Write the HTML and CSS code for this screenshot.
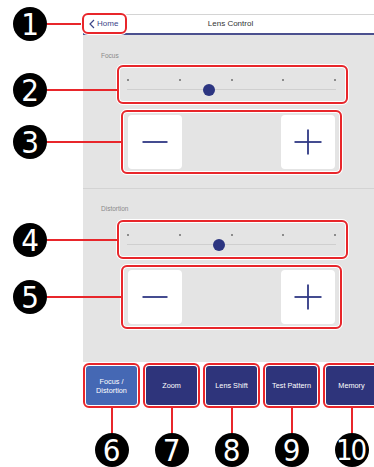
FILE: index.html
```html
<!DOCTYPE html>
<html lang="en">
<head>
<meta charset="utf-8">
<title>Lens Control</title>
<link rel="stylesheet" href="styles.css">
</head>
<body>
<div class="figure">
  <div class="panel">
    <header class="bar">
      <a class="home frame" href="#">
        <svg class="chev" width="6" height="10" viewBox="0 0 6 10"><path d="M5 1 L1 5 L5 9" fill="none" stroke="#3b4488" stroke-width="1.2"/></svg>
        <span>Home</span>
      </a>
      <h1 class="title">Lens Control</h1>
      <span></span>
    </header>

    <section class="group">
      <div class="label">Focus</div>
      <div class="frame slider-frame">
        <div class="slider">
          <div class="ticks"><i></i><i></i><i></i><i></i><i></i></div>
          <div class="track"></div>
          <div class="thumb" style="left:39%"></div>
        </div>
      </div>
      <div class="frame steps">
        <button class="step"><svg width="28" height="28" viewBox="0 0 28 28"><line x1="1.5" y1="14" x2="26.5" y2="14" stroke="#2f3884" stroke-width="1.8"/></svg></button>
        <button class="step"><svg width="28" height="28" viewBox="0 0 28 28"><line x1="0.5" y1="14" x2="27.5" y2="14" stroke="#2f3884" stroke-width="1.8"/><line x1="14" y1="1.5" x2="14" y2="26.5" stroke="#2f3884" stroke-width="1.8"/></svg></button>
      </div>
    </section>

    <hr class="sep">

    <section class="group g2">
      <div class="label">Distortion</div>
      <div class="frame slider-frame">
        <div class="slider">
          <div class="ticks"><i></i><i></i><i></i><i></i><i></i></div>
          <div class="track"></div>
          <div class="thumb" style="left:44%"></div>
        </div>
      </div>
      <div class="frame steps">
        <button class="step"><svg width="28" height="28" viewBox="0 0 28 28"><line x1="1.5" y1="14" x2="26.5" y2="14" stroke="#2f3884" stroke-width="1.8"/></svg></button>
        <button class="step"><svg width="28" height="28" viewBox="0 0 28 28"><line x1="0.5" y1="14" x2="27.5" y2="14" stroke="#2f3884" stroke-width="1.8"/><line x1="14" y1="1.5" x2="14" y2="26.5" stroke="#2f3884" stroke-width="1.8"/></svg></button>
      </div>
    </section>
  </div>

  <nav class="tabs">
    <div class="tab">
      <div class="frame tab-frame"><button class="tab-btn active">Focus /<br>Distortion</button></div>
      <span class="vline"></span>
      <span class="badge">6</span>
    </div>
    <div class="tab">
      <div class="frame tab-frame"><button class="tab-btn">Zoom</button></div>
      <span class="vline"></span>
      <span class="badge">7</span>
    </div>
    <div class="tab">
      <div class="frame tab-frame"><button class="tab-btn">Lens Shift</button></div>
      <span class="vline"></span>
      <span class="badge">8</span>
    </div>
    <div class="tab">
      <div class="frame tab-frame"><button class="tab-btn">Test Pattern</button></div>
      <span class="vline"></span>
      <span class="badge">9</span>
    </div>
    <div class="tab">
      <div class="frame tab-frame"><button class="tab-btn">Memory</button></div>
      <span class="vline"></span>
      <span class="badge ten">10</span>
    </div>
  </nav>

  <div class="callout c1"><span class="badge">1</span><span class="hline"></span></div>
  <div class="callout c2"><span class="badge">2</span><span class="hline"></span></div>
  <div class="callout c3"><span class="badge">3</span><span class="hline"></span></div>
  <div class="callout c4"><span class="badge">4</span><span class="hline"></span></div>
  <div class="callout c5"><span class="badge">5</span><span class="hline"></span></div>
</div>
</body>
</html>
```
FILE: styles.css
```css
* { box-sizing: border-box; }
html, body { margin: 0; padding: 0; background: #fff; }
body { font-family: "Liberation Sans", Arial, sans-serif; }

.figure {
  position: relative;
  width: 374px;
  height: 467px;
  overflow: hidden;
  background: #fff;
  padding-top: 14px;
}

.panel {
  margin-left: 83px;
  width: 291px;
  background: #e4e4e4;
  padding-bottom: 33px;
}

.frame {
  border: 2px solid #e8262b;
  border-radius: 6px;
  box-shadow: 0 0 0 1px #fff, inset 0 0 0 1px #fff;
}

/* header */
.bar {
  display: grid;
  grid-template-columns: 1fr auto 1fr;
  align-items: start;
  height: 21px;
  background: #fff;
  border-top: 1px solid #d4d4d4;
  border-bottom: 2px solid #4b508f;
}
.home {
  justify-self: start;
  display: flex;
  align-items: center;
  gap: 2px;
  width: 45px;
  height: 21px;
  margin: -2px 0 0 -1px;
  padding-left: 5px;
  position: relative;
  z-index: 2;
  background: #fff;
  color: #3b4488;
  font-size: 8px;
  text-decoration: none;
}
.chev { display: block; }
.title {
  margin: 0;
  font-size: 8px;
  font-weight: normal;
  color: #333;
  line-height: 18px;
  padding-left: 4px;
}

/* groups */
.group { padding-top: 17px; }
.g2 { padding-top: 16px; }
.label {
  margin-left: 18px;
  font-size: 6.5px;
  line-height: 8px;
  color: #8a8a8a;
}
.slider-frame {
  margin: 5px 0 0 34px;
  width: 231px;
  height: 39px;
  padding: 0 10px 0 8px;
}
.g2 .slider-frame { margin-top: 7px; }
.slider {
  position: relative;
  height: 35px;
}
.ticks {
  display: flex;
  justify-content: space-between;
  padding-top: 12px;
}
.ticks i {
  display: block;
  width: 2px;
  height: 2px;
  border-radius: 50%;
  background: #6f6f6f;
}
.track {
  margin-top: 8px;
  height: 1px;
  background: #cfcfcf;
}
.thumb {
  position: absolute;
  top: 17px;
  width: 12px;
  height: 12px;
  margin-left: -6px;
  border-radius: 50%;
  background: #2c3581;
}

.steps {
  margin: 6px 0 0 38px;
  width: 221px;
  height: 64px;
  padding: 3px 5px;
  display: flex;
  justify-content: space-between;
}
.step {
  width: 54px;
  height: 54px;
  border: none;
  border-radius: 4px;
  background: #fff;
  padding: 0;
  display: flex;
  align-items: center;
  justify-content: center;
}
.step svg { display: block; }

.sep {
  margin: 14px 0 0 0;
  border: none;
  height: 1px;
  background: #d3d3d3;
}

/* tabs */
.tabs {
  display: flex;
  gap: 3px;
  margin: 1px 0 0 83px;
}
.tab {
  flex: 0 0 57px;
  display: flex;
  flex-direction: column;
  align-items: center;
}
.tab-frame {
  width: 57px;
  height: 45px;
  padding: 1px;
}
.tab-btn {
  width: 100%;
  height: 100%;
  border: none;
  border-radius: 3px;
  background: #2e347b;
  color: #fff;
  font-family: "Liberation Sans", Arial, sans-serif;
  font-size: 7.3px;
  line-height: 9px;
  padding: 0;
}
.tab-btn.active { background: #4568b4; }
.vline {
  display: block;
  width: 2px;
  height: 25px;
  background: #e8262b;
}

/* badges */
.badge {
  flex: 0 0 34px;
  width: 34px;
  height: 34px;
  border-radius: 50%;
  background: #000;
  color: #fff;
  display: flex;
  align-items: center;
  justify-content: center;
  font-family: "Liberation Sans Narrow", "DejaVu Sans Condensed", sans-serif;
  font-size: 31px;
  line-height: 1;
  padding-top: 1px;
}
.badge.ten {
  letter-spacing: -2px;
  font-size: 29px;
  padding-right: 2px;
}

.callout {
  position: absolute;
  left: 13px;
  display: flex;
  align-items: center;
}
.hline {
  display: block;
  height: 2px;
  background: #e8262b;
}
.c1 { top: 7px; }
.c1 .hline { width: 35px; }
.c2 { top: 73px; }
.c2 .hline { width: 70px; }
.c3 { top: 125px; }
.c3 .hline { width: 74px; }
.c4 { top: 223px; }
.c4 .hline { width: 70px; }
.c5 { top: 280px; }
.c5 .hline { width: 74px; }
```
